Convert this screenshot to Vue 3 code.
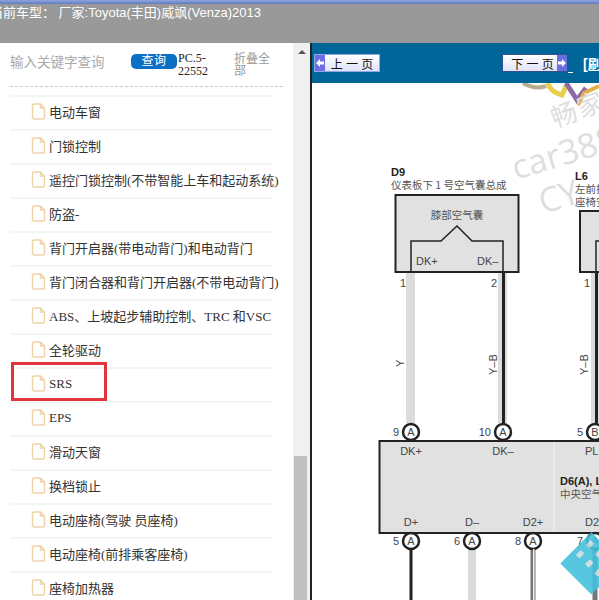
<template>
  <div class="page">
    <div class="top-line"></div>
    <div class="head">当前车型： 厂家:Toyota(丰田)威飒(Venza)2013</div>
    <div class="main">
      <div class="side">
        <div class="tree">
          <div class="search">
            <span class="hint">输入关键字查询</span>
            <span class="query">查询</span>
            <span class="code">PC.5-22552</span>
            <span class="fold">折叠全部</span>
          </div>
          <ul class="list">
            <li v-for="item in items" :key="item" class="row">
              <svg class="doc" width="15" height="17" viewBox="0 0 15 17">
                <path d="M1.5 2.5 Q1.5 1 3 1 H9.5 L13.5 5 V14.5 Q13.5 16 12 16 H3 Q1.5 16 1.5 14.5 Z M9.5 1 V5 H13.5" fill="#fff" stroke="#f0d2a8" stroke-width="1.4" />
              </svg>
              <span>{{ item }}</span>
              <div v-if="item === 'SRS'" class="mark"></div>
            </li>
          </ul>
        </div>
        <div class="scroll">
          <div class="arrow"></div>
          <div class="thumb"></div>
        </div>
      </div>
      <div class="view">
        <div class="bar">
          <div class="pager">
            <span class="side-arrow">
              <svg width="10" height="16" viewBox="0 0 10 16"><path d="M1 8 L5 4 V6.500 H9 V9.500 H5 V12 Z" fill="#fff" /></svg>
            </span>
            <span class="pager-text">上 一 页</span>
          </div>
          <div class="bar-right">
            <div class="pager next">
              <span class="pager-text">下 一 页</span>
              <span class="side-arrow">
                <svg width="10" height="16" viewBox="0 0 10 16"><path d="M9 8 L5 4 V6.500 H1 V9.500 H5 V12 Z" fill="#fff" /></svg>
              </span>
            </div>
            <span class="dash"></span>
            <span class="link">[刷新]</span>
          </div>
        </div>
        <svg class="sheet" viewBox="312 83 287 517" width="287" height="517">
          <g class="marks">
            <path d="M523 83 Q535 90 546 86" fill="none" stroke="#b9ad8e" stroke-width="4" />
            <path d="M548 83 Q550 92 562 95 L566 86" fill="none" stroke="#e6cf4a" stroke-width="5" />
            <path d="M566 83 L577 100 L586 88" fill="none" stroke="#8f6aa8" stroke-width="5" />
            <path d="M578 105 L584 93 L599 86" fill="none" stroke="#e2b04a" stroke-width="4" />
            <text x="555" y="128" transform="rotate(-20 555 128)" class="wm-cn">畅</text>
            <text x="581" y="118" transform="rotate(-20 581 118)" class="wm-cn">家</text>
            <text x="516" y="180" transform="rotate(-17 516 180)" class="wm-en">car388</text>
            <text x="543" y="214" transform="rotate(-17 543 214)" class="wm-en">CY</text>
          </g>

          <text x="391" y="176" class="bold">D9</text>
          <text x="391" y="189" class="cn">仪表板下 1 号空气囊总成</text>
          <rect x="395.500" y="195" width="123" height="77" fill="#e1e1e1" stroke="#222" stroke-width="2" />
          <text x="457" y="219" class="cn mid">膝部空气囊</text>
          <path d="M411 272 V241 H441 L457 226 L472 241 H503 V272" fill="none" stroke="#222" stroke-width="1.500" />
          <text x="416" y="265" class="lab">DK+</text>
          <text x="477" y="265" class="lab">DK–</text>
          <text x="400" y="287" class="lab">1</text>
          <text x="491" y="287" class="lab">2</text>

          <rect x="406" y="273" width="9" height="150" fill="#dcdcdc" />
          <rect x="498" y="273" width="9" height="150" fill="#dcdcdc" />
          <rect x="502" y="272" width="3" height="151" fill="#222" />
          <text x="404" y="367" transform="rotate(-90 404 367)" class="lab">Y</text>
          <text x="497" y="375" transform="rotate(-90 497 375)" class="lab">Y–B</text>
          <text x="588" y="375" transform="rotate(-90 588 375)" class="lab">Y–B</text>

          <text x="575" y="180" class="bold">L6</text>
          <text x="575" y="193" class="cn">左前排</text>
          <text x="575" y="206" class="cn">座椅安</text>
          <rect x="580" y="211" width="40" height="61" fill="#e1e1e1" stroke="#222" stroke-width="2" />
          <path d="M596 272 V241 H620" fill="none" stroke="#222" stroke-width="1.500" />
          <text x="584" y="287" class="lab">1</text>
          <rect x="591" y="273" width="9" height="150" fill="#dcdcdc" />
          <rect x="595" y="272" width="3" height="151" fill="#222" />

          <rect x="379.500" y="441" width="240" height="92" fill="#e1e1e1" stroke="#222" stroke-width="2" />
          <line x1="554" y1="442" x2="554" y2="532" stroke="#f2f2f2" />

          <g v-for="pin in topPins" :key="pin.x">
            <circle :cx="pin.x" cy="432" r="8" fill="#fff" stroke="#222" stroke-width="2.500" />
            <text :x="pin.x" y="436" class="lab mid">{{ pin.letter }}</text>
            <text :x="pin.x - 12" y="436" class="lab end">{{ pin.num }}</text>
          </g>
          <g v-for="pin in bottomPins" :key="pin.x">
            <rect :x="pin.x - pin.w / 2" y="549" :width="pin.w" height="51" :fill="pin.fill" />
            <circle :cx="pin.x" cy="541" r="8" fill="#fff" stroke="#222" stroke-width="2.500" />
            <text :x="pin.x" y="545" class="lab mid">A</text>
            <text :x="pin.x - 12" y="545" class="lab end">{{ pin.num }}</text>
          </g>
          <rect x="533" y="549" width="1.500" height="51" fill="#eee" />

          <text x="411" y="455" class="lab mid">DK+</text>
          <text x="503" y="455" class="lab mid">DK–</text>
          <text x="585" y="455" class="lab">PL</text>
          <text x="560" y="485" class="bold">D6(A), L</text>
          <text x="560" y="498" class="cn">中央空气</text>
          <text x="411" y="526" class="lab mid">D+</text>
          <text x="472" y="526" class="lab mid">D–</text>
          <text x="533" y="526" class="lab mid">D2+</text>
          <text x="585" y="526" class="lab">D2</text>

          <g transform="rotate(45 590 562)" opacity="0.9">
            <rect x="570" y="540" width="44" height="44" fill="#45c0dc" />
            <g fill="#c9dde0">
              <rect x="575" y="546" width="5" height="7" />
              <rect x="588" y="546" width="5" height="7" />
              <rect x="601" y="546" width="5" height="7" />
              <rect x="575" y="560" width="5" height="7" />
              <rect x="588" y="560" width="5" height="7" />
              <rect x="601" y="560" width="5" height="7" />
            </g>
          </g>
        </svg>
      </div>
    </div>
  </div>
</template>

<script setup>
const items = [
  '电动车窗',
  '门锁控制',
  '遥控门锁控制(不带智能上车和起动系统)',
  '防盗-',
  '背门开启器(带电动背门)和电动背门',
  '背门闭合器和背门开启器(不带电动背门)',
  'ABS、上坡起步辅助控制、TRC 和VSC',
  '全轮驱动',
  'SRS',
  'EPS',
  '滑动天窗',
  '换档锁止',
  '电动座椅(驾驶 员座椅)',
  '电动座椅(前排乘客座椅)',
  '座椅加热器'
]

const topPins = [
  { x: 411, num: '9', letter: 'A' },
  { x: 503, num: '10', letter: 'A' },
  { x: 595, num: '5', letter: 'B' }
]

const bottomPins = [
  { x: 411, num: '5', w: 3, fill: '#222' },
  { x: 472, num: '6', w: 8, fill: '#dcdcdc' },
  { x: 533, num: '8', w: 5, fill: '#777' },
  { x: 595, num: '7', w: 5, fill: '#777' }
]
</script>

<style>
html, body {
  margin: 0;
  overflow: hidden;
}
</style>

<style scoped>
.page {
  width: 599px;
  height: 600px;
  overflow: hidden;
  font-family: "Liberation Sans", "Noto Sans CJK SC", sans-serif;
  background: #fff;
}

.top-line {
  height: 4px;
  background: linear-gradient(#8fa5dc, #5f7cc4);
}

.head {
  height: 39px;
  box-sizing: border-box;
  margin-left: -10px;
  background: #999;
  color: #fff;
  font-size: 13px;
  line-height: 17px;
  white-space: nowrap;
}

.main {
  display: flex;
  height: 557px;
}

.side {
  display: flex;
  width: 310px;
  flex: none;
}

.tree {
  width: 293px;
  flex: none;
  padding-left: 10px;
  box-sizing: border-box;
  overflow: hidden;
}

.search {
  display: flex;
  height: 44px;
  width: 273px;
  box-sizing: border-box;
  padding-top: 11px;
  border-bottom: 1px dashed #ccc;
  align-items: flex-start;
}

.hint {
  width: 121px;
  flex: none;
  font-size: 13.500px;
  line-height: 17px;
  color: #aaa;
}

.query {
  width: 46px;
  height: 15px;
  flex: none;
  border-radius: 5px;
  background: #0b6fc4;
  color: #fff;
  font-size: 12px;
  line-height: 14px;
  text-align: center;
  letter-spacing: 0.5px;
}

.code {
  width: 56px;
  flex: none;
  margin: -2px 0 0 1px;
  font-family: "Liberation Serif", serif;
  font-size: 12px;
  line-height: 13px;
  color: #222;
}

.fold {
  width: 37px;
  flex: none;
  margin-top: -1px;
  font-size: 12px;
  line-height: 12px;
  color: #999;
}

.list {
  width: 262px;
  margin: 8px 0 0 0;
  padding: 0;
  list-style: none;
  border-top: 2px solid #f4f4f4;
}

.row {
  position: relative;
  display: flex;
  align-items: center;
  height: 29px;
  padding: 0 0 3px 21px;
  border-bottom: 2px solid #f4f4f4;
  font-family: "Liberation Serif", "Noto Sans CJK SC", serif;
  font-size: 13px;
  color: #333;
  white-space: nowrap;
}

.doc {
  flex: none;
  margin-right: 3px;
}

.mark {
  position: absolute;
  left: 1px;
  top: -7px;
  width: 90px;
  height: 33px;
  border: 3px solid #e2343c;
}

.scroll {
  position: relative;
  width: 17px;
  flex: none;
  background: #f0f0f0;
}

.arrow {
  width: 0;
  margin: 7px auto 0;
  border: 4px solid transparent;
  border-top: 0;
  border-bottom-color: #555;
}

.thumb {
  position: absolute;
  left: 1px;
  top: 413px;
  width: 13px;
  height: 144px;
  background: #c0c0c0;
}

.view {
  flex: 1;
  min-width: 0;
  border-left: 2px solid #222;
}

.bar {
  display: flex;
  justify-content: space-between;
  align-items: center;
  height: 40px;
  padding-left: 2px;
  background: #006699;
  white-space: nowrap;
}

.bar-right {
  display: flex;
  align-items: center;
  margin-right: -26px;
}

.pager {
  display: flex;
  align-items: center;
  width: 64px;
  height: 16px;
  border: 1px solid #8fa8e8;
  background: linear-gradient(#ffffff, #dfe2fa);
  font-size: 12px;
  color: #111;
}

.next {
  border-color: #34508c;
}

.next .pager-text {
  padding-left: 5px;
}

.side-arrow {
  width: 10px;
  height: 16px;
  flex: none;
  background: #6a6ee0;
  overflow: hidden;
}

.side-arrow svg {
  display: block;
}

.pager-text {
  flex: 1;
  text-align: center;
}

.dash {
  align-self: flex-end;
  width: 5px;
  height: 1px;
  margin-right: 10px;
  background: #fff;
}

.link {
  color: #fff;
  font-size: 14px;
  font-weight: 700;
  text-decoration: underline;
  width: 42px;
}

.sheet {
  display: block;
}

.marks text {
  fill: #dedede;
}

.wm-cn {
  font-size: 26px;
}

.wm-en {
  font-family: "Open Sans", sans-serif;
  font-size: 34px;
}

.bold {
  font-size: 11px;
  font-weight: 700;
  fill: #222;
}

.cn {
  font-family: "Noto Sans CJK SC", sans-serif;
  font-size: 10.500px;
  fill: #555;
}

.lab {
  font-size: 11px;
  fill: #444;
}

.mid {
  text-anchor: middle;
}

.end {
  text-anchor: end;
}
</style>
